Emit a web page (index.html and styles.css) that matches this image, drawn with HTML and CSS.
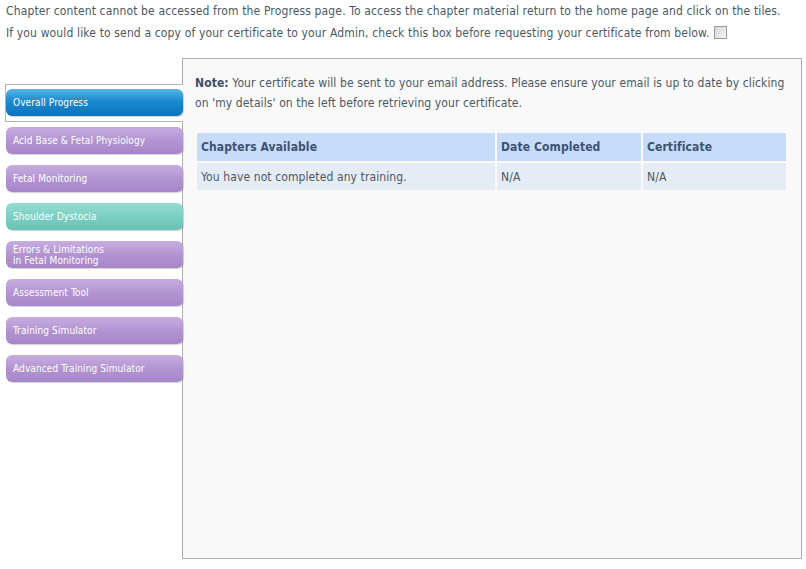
FILE: index.html
```html
<!DOCTYPE html>
<html>
<head>
<meta charset="utf-8">
<link rel="stylesheet" href="styles.css">
</head>
<body>
<div class="intro">
  <p>Chapter content cannot be accessed from the Progress page. To access the chapter material return to the home page and click on the tiles.</p>
  <p>If you would like to send a copy of your certificate to your Admin, check this box before requesting your certificate from below. <span class="check"></span></p>
</div>
<div class="layout">
  <nav class="sidebar">
    <div class="nav-item active"><a class="btn blue">Overall Progress</a></div>
    <div class="nav-item"><a class="btn purple">Acid Base &amp; Fetal Physiology</a></div>
    <div class="nav-item"><a class="btn purple">Fetal Monitoring</a></div>
    <div class="nav-item"><a class="btn teal">Shoulder Dystocia</a></div>
    <div class="nav-item"><a class="btn purple two">Errors &amp; Limitations<br>in Fetal Monitoring</a></div>
    <div class="nav-item"><a class="btn purple">Assessment Tool</a></div>
    <div class="nav-item"><a class="btn purple">Training Simulator</a></div>
    <div class="nav-item"><a class="btn purple">Advanced Training Simulator</a></div>
  </nav>
  <main class="panel">
    <p class="note"><b>Note:</b> Your certificate will be sent to your email address. Please ensure your email is up to date by clicking on 'my details' on the left before retrieving your certificate.</p>
    <table class="chapters">
      <tr><th class="c1">Chapters Available</th><th class="c2">Date Completed</th><th class="c3">Certificate</th></tr>
      <tr><td>You have not completed any training.</td><td>N/A</td><td>N/A</td></tr>
    </table>
  </main>
</div>
</body>
</html>
```
FILE: styles.css
```css
html, body { margin: 0; padding: 0; background: #fff; }
body {
  font-family: "DejaVu Sans Condensed", "DejaVu Sans", Verdana, sans-serif;
  font-size: 12px;
  color: #4a5868;
}
p { margin: 0; }
.intro { padding: 0 0 0 6px; line-height: 22px; letter-spacing: 0.14px; }
.check {
  display: inline-block;
  width: 11px; height: 11px;
  border: 1px solid #9a9a9a;
  background: linear-gradient(135deg, #d6d6d6, #f4f4f4);
  vertical-align: -2px;
  margin-left: 1px;
}
.layout { display: flex; margin-top: 14px; }
.sidebar {
  width: 178px;
  margin-left: 5px;
  margin-right: -1px;
  padding-top: 26px;
  position: relative;
  z-index: 1;
}
.nav-item {
  padding: 4px 0 5px;
  border: 1px solid transparent;
  border-right: 0;
}
.nav-item.active { border-color: #b4b4b4; background: #fff; }
.btn {
  display: flex;
  align-items: center;
  height: 27px;
  box-sizing: border-box;
  padding-left: 7px;
  border-radius: 6px;
  color: #fff;
  font-size: 10px;
  line-height: 11px;
  letter-spacing: 0.1px;
  box-shadow: 1px 1px 1px rgba(0,0,0,0.18);
}
.btn.blue { background: linear-gradient(#56b5e8, #1a8ad0 45%, #0b72bd); }
.btn.purple { background: linear-gradient(#c7ade0, #b394d2 50%, #a686c8); }
.btn.teal { background: linear-gradient(#96ddd2, #7ccfc2 50%, #69c1b4); }
.panel {
  width: 620px;
  height: 501px;
  box-sizing: border-box;
  border: 1px solid #adadad;
  background: #f9f9f9;
  padding: 14px 12px 0 12px;
}
.note { line-height: 20px; letter-spacing: 0.1px; }
.note b { color: #3d4d64; }
.chapters {
  margin-top: 18px;
  width: 593px;
  border-collapse: separate;
  border-spacing: 2px 2px;
  letter-spacing: 0.1px;
}
.chapters th, .chapters td {
  text-align: left;
  padding: 0 4px;
}
.chapters th { background: #c6dcf8; color: #3f5272; font-weight: bold; height: 28px; }
.chapters td { background: #e6ecf5; height: 27px; }
.c1 { width: 290px; }
.c2 { width: 136px; }
```
